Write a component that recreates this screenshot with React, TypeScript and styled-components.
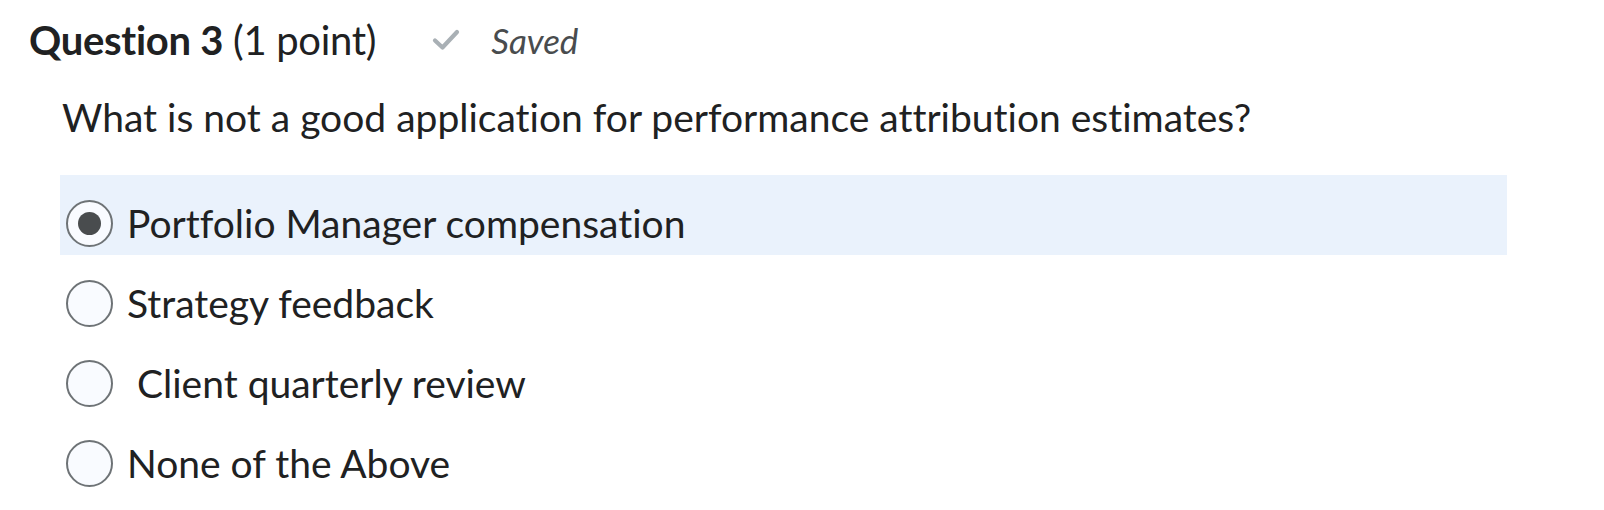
import styled, { createGlobalStyle } from 'styled-components';

const GlobalStyle = createGlobalStyle`
  body {
    margin: 0;
    background: #ffffff;
    font-family: Lato, "Open Sans", sans-serif;
    font-variant-ligatures: none;
    color: #202122;
  }
`;

const Page = styled.div`
  padding: 14px 0 0 29px;
`;

const Header = styled.div`
  display: flex;
  align-items: center;
  height: 52px;
`;

const Title = styled.h2`
  margin: 0;
  font-size: 40px;
  font-weight: 400;
  letter-spacing: -0.3px;
`;

const Strong = styled.span`
  font-weight: 700;
`;

const SaveState = styled.span`
  display: flex;
  align-items: center;
  margin-left: 56px;
  gap: 31px;
  font-size: 35px;
  font-style: italic;
  color: #494c4e;
`;

const Prompt = styled.p`
  margin: 27px 0 0 33px;
  font-size: 39px;
  line-height: 48px;
`;

const Options = styled.div`
  display: flex;
  flex-direction: column;
  margin: 34px 0 0 31px;
  width: 1447px;
`;

const Option = styled.label<{ $selected?: boolean }>`
  display: flex;
  align-items: flex-start;
  height: 80px;
  box-sizing: border-box;
  padding: 25px 0 0 6px;
  background: ${(p) => (p.$selected ? '#eaf2fc' : 'transparent')};
  font-size: 39px;
  line-height: 46px;
  cursor: pointer;
`;

const Radio = styled.span<{ $checked?: boolean }>`
  display: flex;
  align-items: center;
  justify-content: center;
  flex: none;
  box-sizing: border-box;
  width: 47px;
  height: 47px;
  border-radius: 50%;
  border: 2px solid #6e7376;
  background: #f9fbff;
  margin-right: 14px;

  &::after {
    content: '';
    display: ${(p) => (p.$checked ? 'block' : 'none')};
    width: 23px;
    height: 23px;
    border-radius: 50%;
    background: #494c4e;
  }
`;

const CheckIcon = () => (
  <svg width="28" height="22" viewBox="0 0 28 22" fill="none">
    <path
      d="M3 11.5 L10.5 18.5 L25 3"
      stroke="#a9b0b5"
      strokeWidth="4.2"
      strokeLinecap="round"
      strokeLinejoin="round"
    />
  </svg>
);

const answers = [
  'Portfolio Manager compensation',
  'Strategy feedback',
  '\u00a0Client quarterly review',
  'None of the Above',
];

export default function App() {
  return (
    <>
      <GlobalStyle />
      <Page>
        <Header>
          <Title>
            <Strong>Question 3</Strong> (1 point)
          </Title>
          <SaveState>
            <CheckIcon />
            Saved
          </SaveState>
        </Header>
        <Prompt>What is not a good application for performance attribution estimates?</Prompt>
        <Options>
          {answers.map((a, i) => (
            <Option key={a} $selected={i === 0}>
              <Radio $checked={i === 0} />
              {a}
            </Option>
          ))}
        </Options>
      </Page>
    </>
  );
}
